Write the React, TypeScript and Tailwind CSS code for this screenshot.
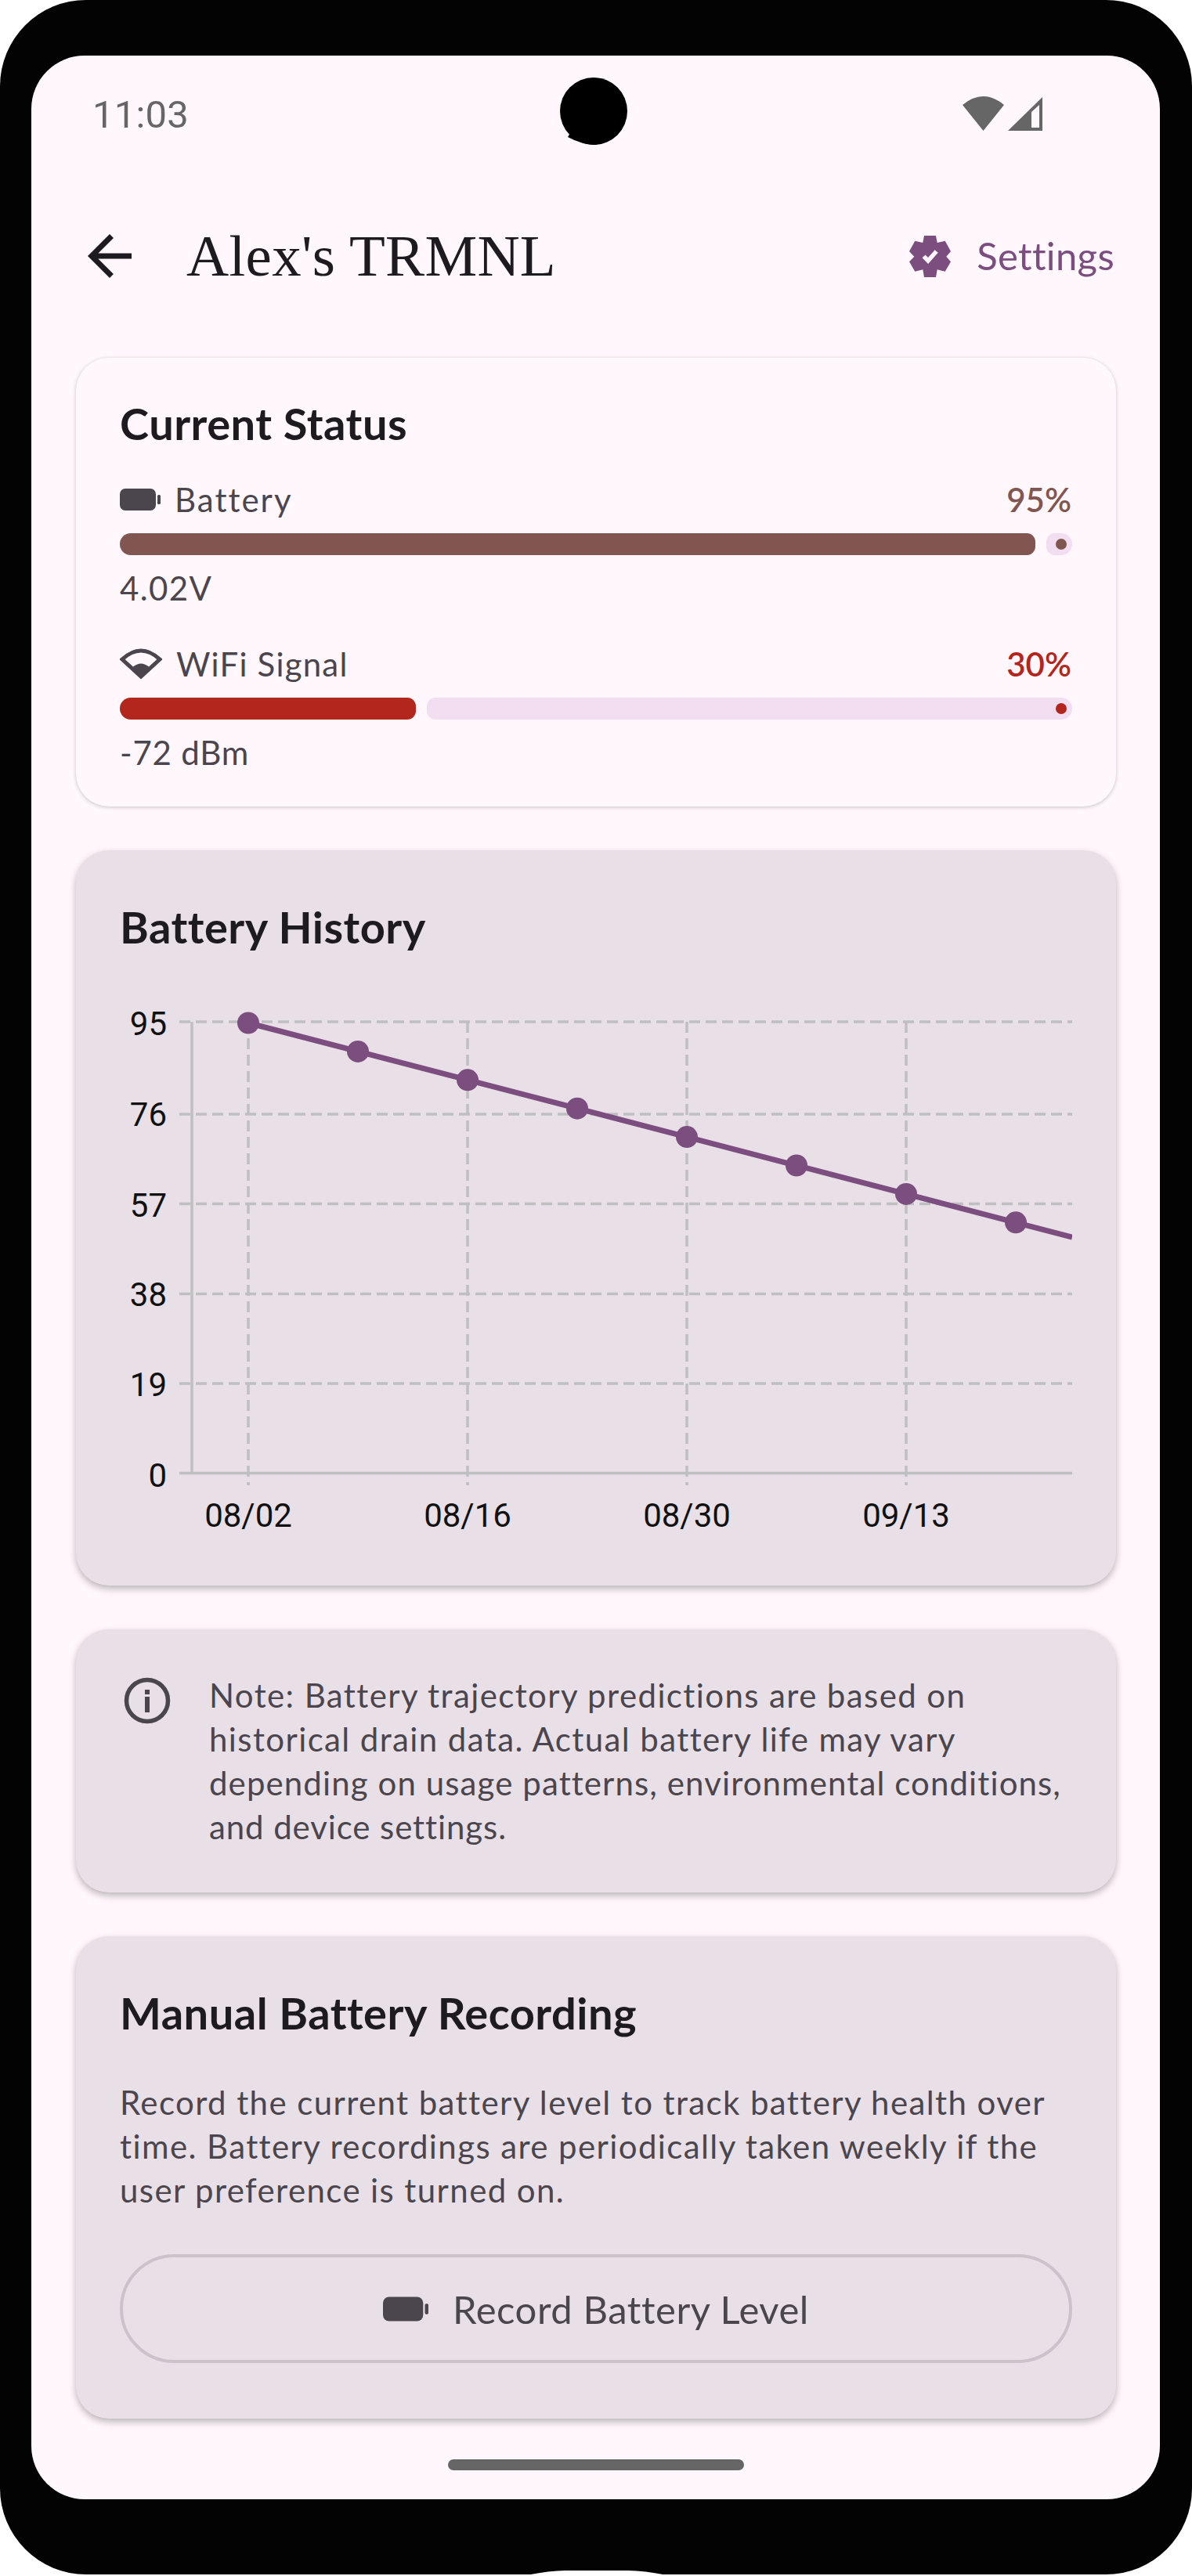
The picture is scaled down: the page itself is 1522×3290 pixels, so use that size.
import React from 'react';

const LATO = "font-['Lato',sans-serif]";
const CARD_GREY = 'rounded-[42px] bg-[#E9E0E7] shadow-[0_4px_10px_rgba(0,0,0,0.28)]';
const BODY = 'text-[42px] leading-[56px] text-[#4B454E]';
const TITLE = 'h-[56px] text-[56px] leading-[56px] font-bold tracking-[0.5px] text-[#1D1A20]';

const BatteryIcon = ({ width, height }: { width: number; height: number }) => (
  <svg width={width} height={height} viewBox="0 0 52 28" className="shrink-0">
    <rect x="0" y="0" width="46" height="28" rx="7" fill="#4B454E" />
    <rect x="48" y="8" width="4" height="12" rx="1.5" fill="#4B454E" />
  </svg>
);

const WifiOutlineIcon = () => (
  <svg width="54" height="40" viewBox="1 0 54 40" className="shrink-0">
    <path d="M4 14 Q28 -8 52 14 L28 36 Z" fill="none" stroke="#4B454E" strokeWidth="5" strokeLinejoin="miter" />
    <path d="M17.5 24 Q28 15 38.5 24 L28 38 Z" fill="#4B454E" />
  </svg>
);

const BackArrow = () => (
  <svg width="84" height="84" viewBox="0 0 24 24" fill="#1D1A20">
    <path d="M20 11H7.83l5.59-5.59L12 4l-8 8 8 8 1.41-1.41L7.83 13H20v-2z" />
  </svg>
);

const GearCheck = () => (
  <svg width="53" height="53" viewBox="0 0 53 53" className="shrink-0">
    <path
      d="M19 0H34L35.7 9 45.7 6.7 53 20 47.3 26.7 53 33.3 45.7 45.7 35.7 43.3 34 53H19L17.3 43.3 7.3 45.7 0 33.3 6.3 26.7 0 20 7.3 6.7 17.3 9Z"
      fill="#7B4E7F"
    />
    <path d="M18.5 26.3L24 32 34.7 20" fill="none" stroke="#FFF7FC" strokeWidth="5.5" />
  </svg>
);

const InfoIcon = () => (
  <svg width="70" height="70" viewBox="0 0 70 70" className="shrink-0">
    <circle cx="35" cy="35" r="26.5" fill="none" stroke="#4B454E" strokeWidth="5.5" />
    <rect x="32" y="21" width="6" height="6" fill="#4B454E" />
    <rect x="32" y="30" width="6" height="20" fill="#4B454E" />
  </svg>
);

const StatusIcons = () => (
  <svg width="102" height="44" viewBox="0 0 102 44">
    <path d="M0 11 Q26.5 -11 53 11 L26.5 44 Z" fill="#666666" />
    <path d="M58 44 L102 1 V44 Z" fill="#666666" />
    <path d="M88 20 L98 11 V40 H88 Z" fill="#FFF7FC" />
  </svg>
);

const StatusMeter = ({
  icon,
  label,
  labelClass,
  value,
  color,
  percent,
  note,
  noteClass,
  gapClass,
}: {
  icon: React.ReactNode;
  label: string;
  labelClass: string;
  value: string;
  color: string;
  percent: number;
  note: string;
  noteClass: string;
  gapClass: string;
}) => (
  <div className={gapClass}>
    <div className="flex h-[56px] items-center justify-between">
      <div className="flex items-center gap-[18px]">
        {icon}
        <span className={`${BODY} ${labelClass}`}>{label}</span>
      </div>
      <span className="pr-[1px] text-[42px] leading-[56px] font-semibold" style={{ color }}>
        {value}
      </span>
    </div>
    <div className="mt-[15px] flex h-[28px] gap-[14px]">
      <div className="h-full rounded-l-[14px] rounded-r-[11px]" style={{ width: percent, backgroundColor: color }} />
      <div className="relative h-full flex-1 rounded-l-[11px] rounded-r-[14px] bg-[#F2DDF1]">
        <div className="absolute right-[7px] top-[7px] h-[14px] w-[14px] rounded-full" style={{ backgroundColor: color }} />
      </div>
    </div>
    <div className={`mt-[14px] ${BODY} ${noteClass}`}>{note}</div>
  </div>
);

const gridY = [1305, 1423, 1537.5, 1652.5, 1767];
const yLabels: [string, number][] = [
  ['95', 1322],
  ['76', 1438],
  ['57', 1554],
  ['38', 1668],
  ['19', 1783],
  ['0', 1899],
];
const xLabels: [string, number][] = [
  ['08/02', 317],
  ['08/16', 597],
  ['08/30', 877],
  ['09/13', 1157],
];
const points = [0, 1, 2, 3, 4, 5, 6, 7].map((i) => [317 + i * 140, 1306.5 + i * 36.4]);

// chart coordinates are page pixels, the viewBox shifts them into the card
const BatteryChart = () => (
  <svg width="1216" height="689" viewBox="153 1280 1216 689" className="mt-[68px] block">
    {gridY.map((y) => (
      <line key={y} x1="229" x2="1369" y1={y} y2={y} stroke="#BFBFC2" strokeWidth="3.5" strokeDasharray="14 7" />
    ))}
    {xLabels.map(([, x]) => (
      <line key={x} x1={x} x2={x} y1="1305" y2="1897" stroke="#BFBFC2" strokeWidth="3.5" strokeDasharray="14 7" />
    ))}
    <line x1="245" x2="245" y1="1305" y2="1882" stroke="#BFBFC2" strokeWidth="3.5" />
    <line x1="229" x2="1369" y1="1881.5" y2="1881.5" stroke="#BFBFC2" strokeWidth="3.5" />
    <line x1="317" y1="1306.5" x2="1369" y2={1306.5 + (1052 / 140) * 36.4} stroke="#7B4E7F" strokeWidth="7" />
    {points.map(([x, y]) => (
      <circle key={x} cx={x} cy={y} r="14" fill="#7B4E7F" />
    ))}
    {yLabels.map(([t, y]) => (
      <text key={t} x="213" y={y} textAnchor="end" fontFamily="Roboto, sans-serif" fontSize="42" fill="#111111">
        {t}
      </text>
    ))}
    {xLabels.map(([t, x]) => (
      <text key={t} x={x} y="1950" textAnchor="middle" fontFamily="Roboto, sans-serif" fontSize="42" fill="#111111">
        {t}
      </text>
    ))}
  </svg>
);

export default function App() {
  return (
    <div className={`relative h-[3290px] w-[1522px] overflow-hidden bg-white ${LATO}`}>
      <div className="h-[3288px] overflow-hidden rounded-[110px] bg-[#030303] pl-[40px] pt-[71px]">
        <div className="relative h-[3121px] w-[1441px] overflow-hidden rounded-[68px] bg-[#FFF7FC]">
          {/* Status bar */}
          <div className="flex h-[148px] items-center justify-between pl-[78px] pr-[150px]">
            <span className="pt-[3px] font-['Roboto',sans-serif] text-[49px] tracking-[0.2px] text-[#666666]">11:03</span>
            <StatusIcons />
          </div>
          {/* Camera cutout */}
          <svg width="90" height="90" viewBox="0 0 90 90" className="absolute left-[673px] top-[28px]">
            <circle cx="45" cy="43" r="43" fill="#000000" />
            <path d="M18 66 L12 76 Q30 86 50 86 Z" fill="#000000" />
          </svg>

          {/* App bar */}
          <div className="mt-[66px] flex h-[84px] items-center pl-[58px] pr-[58px]">
            <BackArrow />
            <span className="ml-[56px] flex-1 font-['Liberation_Serif',serif] text-[75px] leading-[84px] tracking-[0.3px] text-[#1D1A20]">
              Alex's TRMNL
            </span>
            <GearCheck />
            <span className="ml-[33px] text-[49px] tracking-[0.35px] text-[#7B4E7F]">Settings</span>
          </div>

          {/* Scrolling content */}
          <div className="flex flex-col gap-[56px] overflow-hidden pb-[16px] pl-[57px] pr-[56px] pt-[88px]">
            <section className="rounded-[42px] bg-[#FFF7FC] px-[56px] pb-[41px] pt-[56px] shadow-[0_1px_5px_rgba(0,0,0,0.22)]">
              <h2 className={TITLE}>Current Status</h2>
              <StatusMeter
                icon={<BatteryIcon width={52} height={28} />}
                label="Battery"
                labelClass="tracking-[2px]"
                value="95%"
                color="#825650"
                percent={1169}
                note="4.02V"
                noteClass="tracking-[1.4px]"
                gapClass="mt-[41px]"
              />
              <StatusMeter
                icon={<WifiOutlineIcon />}
                label="WiFi Signal"
                labelClass="tracking-[1.2px]"
                value="30%"
                color="#B3261E"
                percent={378}
                note="-72 dBm"
                noteClass="tracking-[0.8px]"
                gapClass="mt-[41px]"
              />
            </section>

            <section className={`${CARD_GREY} px-[56px] pb-[56px] pt-[70px]`}>
              <h2 className={TITLE}>Battery History</h2>
              <BatteryChart />
            </section>

            <section className={`${CARD_GREY} flex gap-[44px] p-[56px]`}>
              <InfoIcon />
              <p className={`${BODY} tracking-[1.4px] whitespace-nowrap`}>
                Note: Battery trajectory predictions are based on
                <br />
                historical drain data. Actual battery life may vary
                <br />
                <span className="tracking-[1.1px]">depending on usage patterns, environmental conditions,</span>
                <br />
                <span className="tracking-[0.9px]">and device settings.</span>
              </p>
            </section>

            <section className={`${CARD_GREY} px-[56px] pb-[71px] pt-[70px]`}>
              <h2 className={TITLE}>Manual Battery Recording</h2>
              <p className={`mt-[58px] ${BODY} tracking-[1.4px]`}>
                Record the current battery level to track battery health over time. Battery recordings are periodically
                taken weekly if the user preference is turned on.
              </p>
              <button className="mt-[54px] flex h-[139px] w-full items-center justify-center gap-[31px] rounded-full border-[4px] border-[#CDC2CB]">
                <BatteryIcon width={58} height={32} />
                <span className="pt-[2px] text-[49px] tracking-[0.55px] text-[#4B454E]">Record Battery Level</span>
              </button>
            </section>
          </div>

          {/* Gesture bar */}
          <div className="mx-auto mt-[36px] h-[14px] w-[378px] rounded-[7px] bg-[#666666]" />
        </div>
      </div>
      {/* Notch at the bottom of the device body */}
      <svg width="180" height="6" viewBox="0 0 180 6" className="absolute left-[672px] top-[3283px]">
        <path d="M0 6 Q30 0 50 0 H130 Q150 0 180 6 Z" fill="#FFFFFF" />
      </svg>
    </div>
  );
}
